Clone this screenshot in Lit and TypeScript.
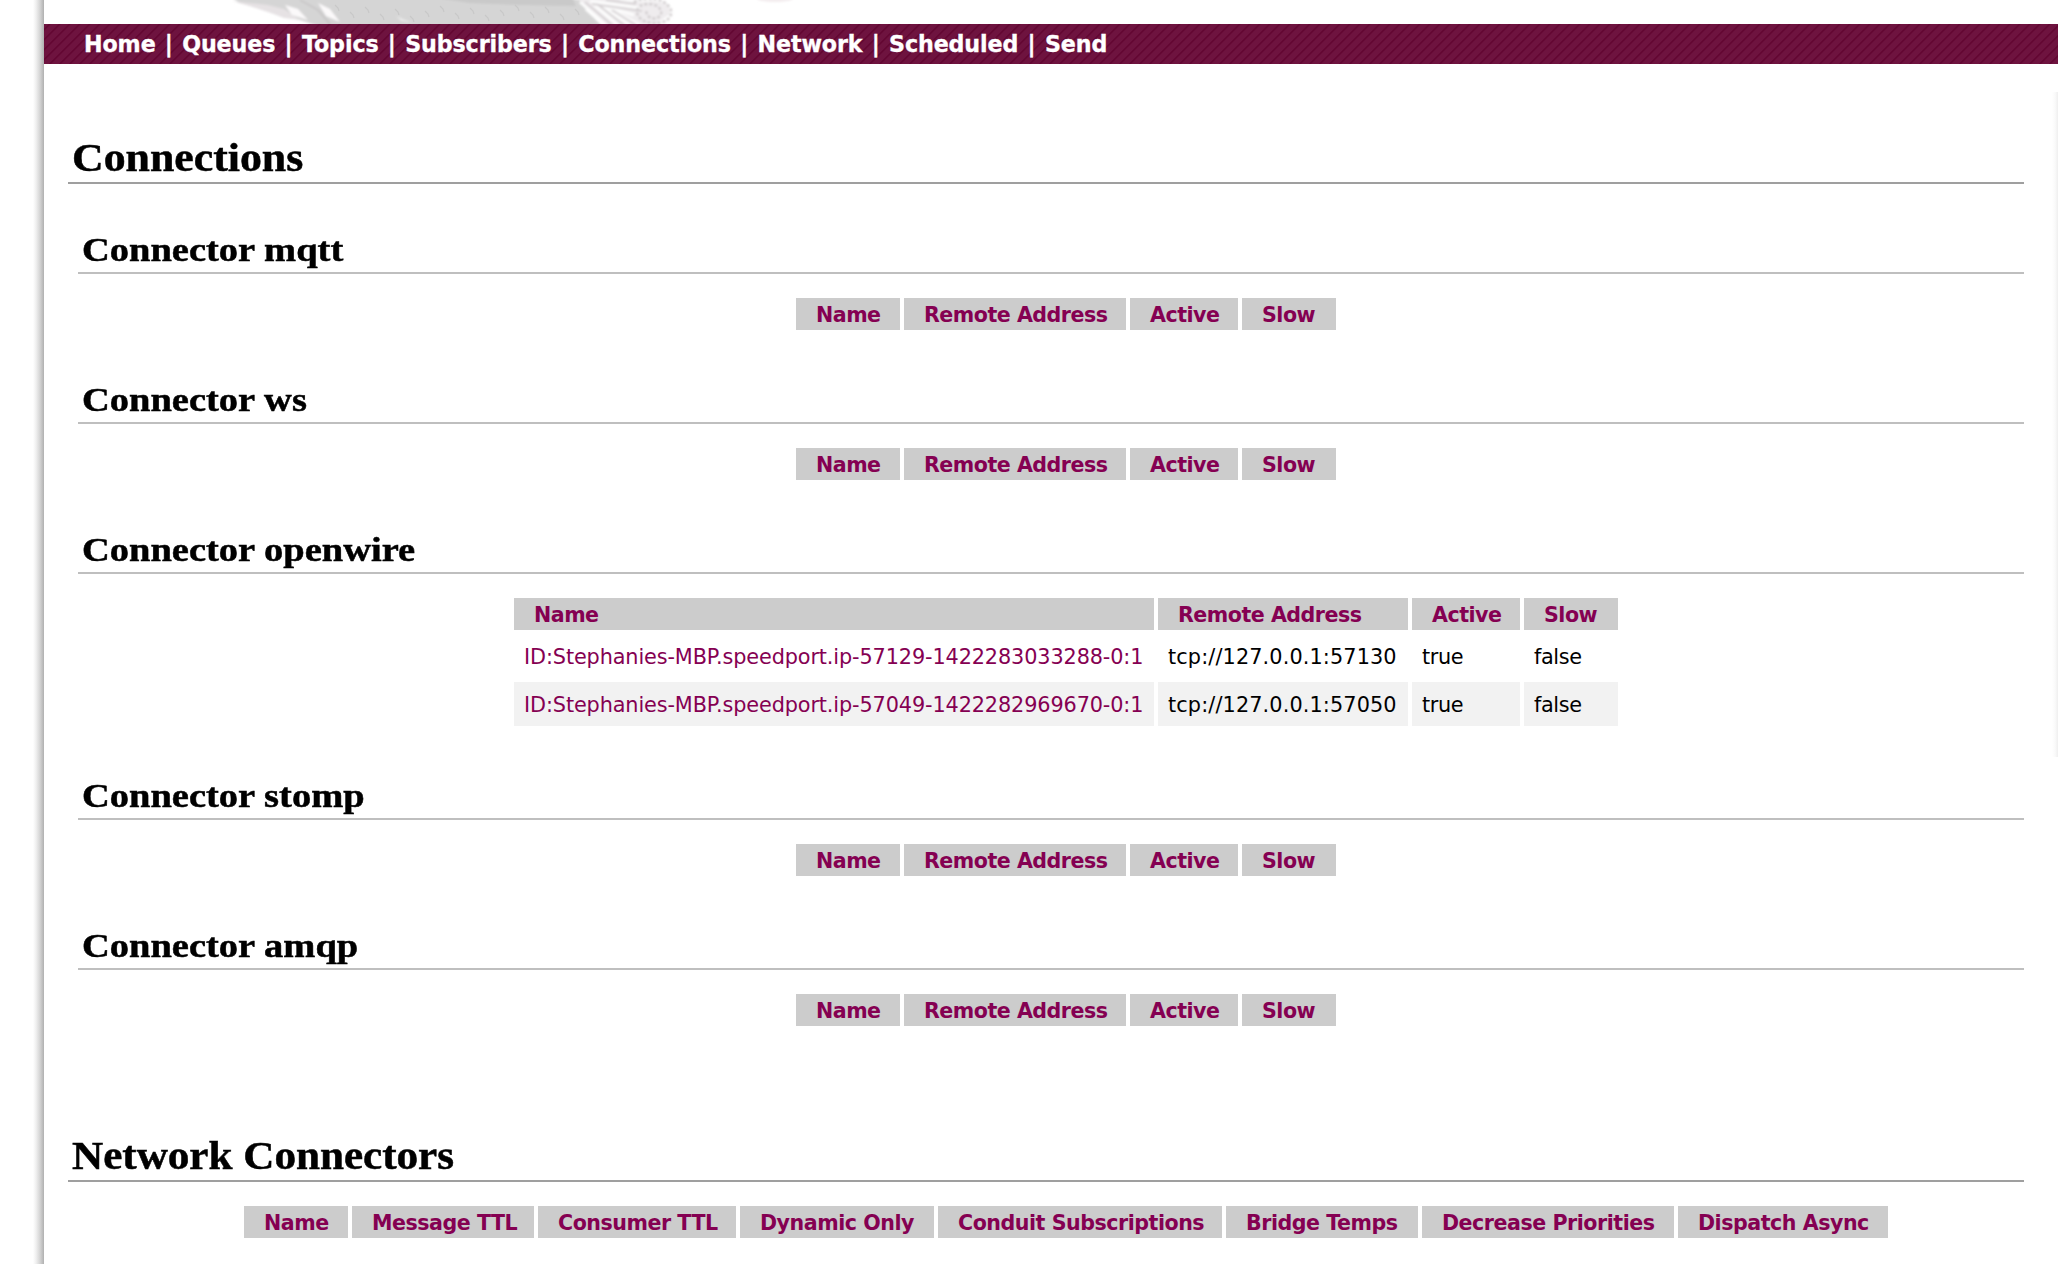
import { LitElement, html, css, svg } from "lit";
import { customElement, property } from "lit/decorators.js";

interface Connection {
  id: string;
  address: string;
  active: boolean;
  slow: boolean;
}

interface Connector {
  name: string;
  connections: Connection[];
}

const NAV = ["Home", "Queues", "Topics", "Subscribers", "Connections", "Network", "Scheduled", "Send"];

const CONNECTORS: Connector[] = [
  { name: "mqtt", connections: [] },
  { name: "ws", connections: [] },
  {
    name: "openwire",
    connections: [
      { id: "ID:Stephanies-MBP.speedport.ip-57129-1422283033288-0:1", address: "tcp://127.0.0.1:57130", active: true, slow: false },
      { id: "ID:Stephanies-MBP.speedport.ip-57049-1422282969670-0:1", address: "tcp://127.0.0.1:57050", active: true, slow: false },
    ],
  },
  { name: "stomp", connections: [] },
  { name: "amqp", connections: [] },
];

const NETWORK_COLUMNS = [
  "Name", "Message TTL", "Consumer TTL", "Dynamic Only",
  "Conduit Subscriptions", "Bridge Temps", "Decrease Priorities", "Dispatch Async",
];

@customElement("feather-art")
export class FeatherArt extends LitElement {
  static styles = css`
    :host { display: block; height: 24px; }
    svg { display: block; }
  `;

  render() {
    const barbs = Array.from({ length: 17 }, (_, i) => {
      const x = 335 + i * 15;
      const y = 5 + ((i * 7) % 12);
      return svg`<path d="M${x} ${y}l3 3l1 3" stroke="#c8c8c8" stroke-width="1.2" fill="none"/>`;
    });
    return html`
      <svg width="800" height="24" viewBox="44 0 800 24">
        <defs>
          <filter id="soft" x="-5%" y="-50%" width="110%" height="200%"><feGaussianBlur stdDeviation="1"/></filter>
        </defs>
        <g filter="url(#soft)">
          <path d="M230 -4L560 -4L590 2L585 10L594 18L604 28L324 28L300 20L276 14L254 7L240 3Z" fill="#d5d5d5"/>
          <path d="M232 1Q262 9 284 18L300 20L284 9L268 5Z" fill="#e6e2e4"/>
          <path d="M285 5L298 9L308 20L292 15Z M318 3L330 9L340 22L326 16Z" fill="#fbf9fa"/>
          <path d="M300 0L318 10L330 24" stroke="#c9c7c8" stroke-width="2" fill="none"/>
          <path d="M430 -3L572 -3L576 6L520 5L470 3Z" fill="#c9c9c9"/>
          <path d="M396 16l5 5l12 2z" fill="#e8e8e8"/>
          <path d="M578 -2L640 -2L668 4L670 14L656 24L606 26L590 12Z" fill="#efecee"/>
          <path d="M580 2L606 25M592 3L618 25M604 8L630 25M616 12L640 25M590 1L640 8M600 5L634 15M620 1L650 0"
            stroke="#fcfcfc" stroke-width="3" fill="none"/>
          <path d="M585 2L612 25M597 4L624 25M612 10L636 25M592 4L642 11M606 0L636 4"
            stroke="#d6d2d4" stroke-width="1.8" fill="none"/>
          <path d="M634 2C646 -4 664 -2 670 8C675 17 664 25 652 23C638 22 632 10 642 5C654 1 665 9 660 16C654 22 644 16 647 10"
            stroke="#d0ccce" stroke-width="2.4" stroke-dasharray="3 2" fill="none"/>
        </g>
        <g>${barbs}</g>
        <ellipse cx="775" cy="-1.5" rx="18" ry="3.5" fill="#f3ecee" filter="url(#soft)"/>
      </svg>
    `;
  }
}

@customElement("nav-bar")
export class NavBar extends LitElement {
  static styles = css`
    :host {
      display: flex;
      height: 40px;
      box-sizing: border-box;
      padding-left: 40px;
      background-color: #6e133f;
      background-image: repeating-linear-gradient(
        135deg,
        rgba(94, 0, 44, 0) 0 2.8px,
        rgba(94, 0, 44, 0.7) 3.8px 4.4px,
        rgba(94, 0, 44, 0) 5.4px 7.0711px
      );
      color: #fff;
      font: bold 22.2px/40px "DejaVu Sans", Verdana, sans-serif;
      white-space: pre;
      -webkit-text-stroke: 0.35px #fff;
    }
    .bar { word-spacing: 1.5px; }
    .item { letter-spacing: -0.1px; }
  `;

  render() {
    return html`${NAV.map((item, i) => html`${i ? html`<span class="bar"> | </span>` : ""}<span class="item">${item}</span>`)}`;
  }
}

@customElement("connector-table")
export class ConnectorTable extends LitElement {
  @property({ attribute: false }) rows: Connection[] = [];

  static styles = css`
    :host { display: flex; justify-content: center; margin: 24px 0 0 40px; }
    .grid {
      display: grid;
      grid-template-columns: 104px 222px 108px 94px;
      column-gap: 4px;
      row-gap: 4px;
      font: 20.8px/24px "DejaVu Sans", Verdana, sans-serif;
      white-space: nowrap;
    }
    .filled { grid-template-columns: 640px 250px 108px 94px; }
    .th {
      box-sizing: border-box;
      height: 32px;
      padding-left: 20px;
      background: #ccc;
      color: #850052;
      font-size: 20.6px;
      font-weight: bold;
      line-height: 34px;
      letter-spacing: -0.5px;
    }
    .td { box-sizing: border-box; height: 44px; padding-left: 10px; line-height: 46px; color: #000; letter-spacing: -0.35px; }
    .even { background: #f2f2f2; }
    .id { color: #850052; letter-spacing: -0.12px; }
    .address { letter-spacing: 0.12px; }
  `;

  render() {
    return html`
      <div class="grid ${this.rows.length ? "filled" : ""}">
        ${["Name", "Remote Address", "Active", "Slow"].map((h) => html`<div class="th">${h}</div>`)}
        ${this.rows.map((r, i) => {
          const shade = i % 2 ? "even" : "";
          return html`
            <div class="td id ${shade}">${r.id}</div>
            <div class="td address ${shade}">${r.address}</div>
            <div class="td ${shade}">${r.active}</div>
            <div class="td ${shade}">${r.slow}</div>
          `;
        })}
      </div>
    `;
  }
}

@customElement("app-root")
export class AppRoot extends LitElement {
  static styles = css`
    :host {
      display: flex;
      width: 2058px;
      height: 1264px;
      overflow: hidden;
      background: #fff;
      font-family: "DejaVu Sans", Verdana, sans-serif;
    }
    .shadow {
      flex: none;
      width: 44px;
      background: linear-gradient(90deg, #fff 33px, #f0f0f0 36px, #d4d4d4 40px, #b0b0b0 44px);
    }
    .page { position: relative; flex: 1; min-width: 0; }
    .edge {
      position: absolute;
      right: 0;
      top: 92px;
      width: 6px;
      height: 665px;
      background: linear-gradient(90deg, #fff, #fafafa 50%, #efefef);
    }
    .content { padding: 0 34px 0 24px; }
    h1, h2 {
      margin: 0;
      box-sizing: border-box;
      font-family: "Liberation Serif", Georgia, serif;
      font-weight: bold;
      color: #000;
      white-space: nowrap;
      -webkit-text-stroke: 0.5px #000;
    }
    h1 {
      height: 60px;
      padding-left: 4px;
      border-bottom: 2px solid #9f9f9f;
      font-size: 40px;
      line-height: 68px;
    }
    h2 {
      height: 60px;
      margin-left: 10px;
      padding-left: 3.5px;
      border-bottom: 2px solid #bfbfbf;
      font-size: 34px;
      line-height: 71px;
    }
    .wide { display: inline-block; transform-origin: 0 50%; transform: scaleX(1.095); }
    .wide-long { transform: scaleX(1.078); }
    .wide-sub { transform: scaleX(1.132); }
    .first { margin-top: 60px; }
    .sub { margin-top: 30px; }
    .sub + .sub { margin-top: 34px; }
    .network { margin-top: 96px; }
    .network-row {
      display: grid;
      grid-template-columns: 104px 182px 198px 194px 284px 192px 252px 210px;
      column-gap: 4px;
      justify-content: center;
      margin: 24px 0 0 40px;
      font: bold 20.6px/34px "DejaVu Sans", Verdana, sans-serif;
      letter-spacing: -0.47px;
      white-space: nowrap;
    }
    .th { height: 32px; box-sizing: border-box; padding-left: 20px; background: #ccc; color: #850052; }
  `;

  render() {
    return html`
      <div class="shadow"></div>
      <div class="page">
        <feather-art></feather-art>
        <nav-bar></nav-bar>
        <div class="content">
          <h1 class="first"><span class="wide">Connections</span></h1>
          ${CONNECTORS.map(
            (c) => html`
              <section class="sub">
                <h2><span class="wide wide-sub">Connector ${c.name}</span></h2>
                <connector-table .rows=${c.connections}></connector-table>
              </section>
            `,
          )}
          <h1 class="network"><span class="wide wide-long">Network Connectors</span></h1>
          <div class="network-row">${NETWORK_COLUMNS.map((h) => html`<div class="th">${h}</div>`)}</div>
        </div>
        <div class="edge"></div>
      </div>
    `;
  }
}
